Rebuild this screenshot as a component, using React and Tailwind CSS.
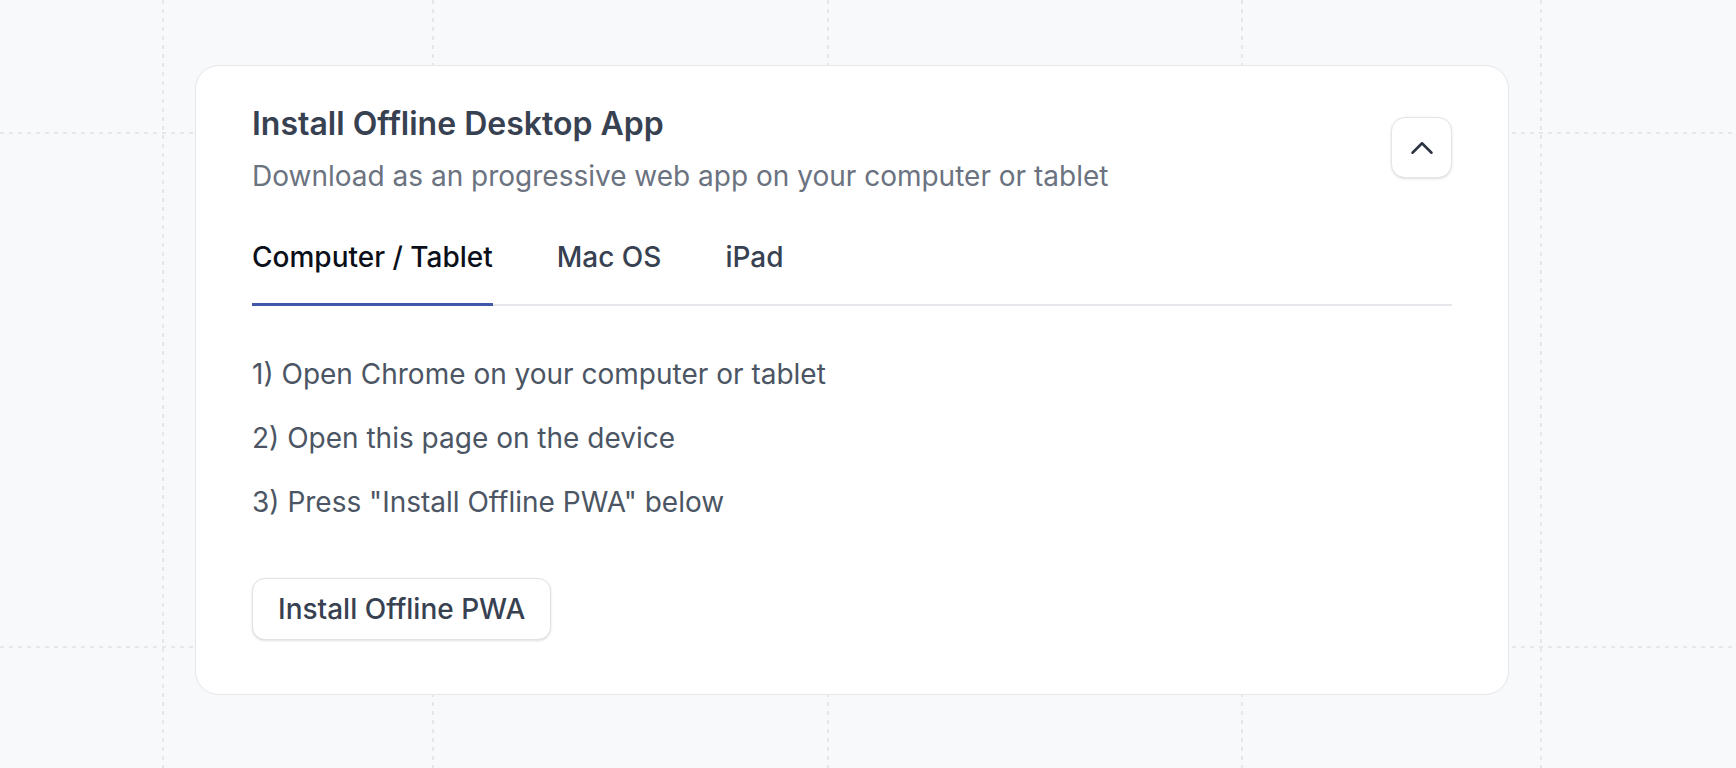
import React, { useState } from 'react';
import { ChevronUp } from 'lucide-react';

// Fond : lignes pointillées décoratives
const V_LINES = ['left-[162px]', 'left-[432px]', 'left-[827px]', 'left-[1241px]', 'left-[1540px]'];
const H_LINES = ['top-[132px]', 'top-[646px]'];

const TABS = ['Computer / Tablet', 'Mac OS', 'iPad'];

const STEPS = {
    'Computer / Tablet': [
        '1) Open Chrome on your computer or tablet',
        '2) Open this page on the device',
        '3) Press "Install Offline PWA" below',
    ],
    'Mac OS': [
        '1) Open Safari on your Mac',
        '2) Open this page on the device',
        '3) Choose File > Add to Dock',
    ],
    'iPad': [
        '1) Open Safari on your iPad',
        '2) Tap the share button',
        '3) Choose "Add to Home Screen"',
    ],
};

const GridBackground = () => (
    <div className="absolute inset-0 pointer-events-none">
        {V_LINES.map(pos => (
            <div
                key={pos}
                className={`absolute top-0 bottom-0 w-[2px] ${pos} bg-[repeating-linear-gradient(to_bottom,#e5e7eb_0_4px,transparent_4px_9px)]`}
            />
        ))}
        {H_LINES.map(pos => (
            <div
                key={pos}
                className={`absolute left-0 right-0 h-[2px] ${pos} bg-[repeating-linear-gradient(to_right,#e5e7eb_0_4px,transparent_4px_9px)]`}
            />
        ))}
    </div>
);

const App = () => {
    const [activeTab, setActiveTab] = useState(TABS[0]);
    const [open, setOpen] = useState(true);

    return (
        <div className="relative min-h-[768px] bg-[#f8f9fb] overflow-hidden font-['Inter','Liberation_Sans',sans-serif]">
            <GridBackground />

            <div className="relative ml-[195px] pt-[65px]">
                <div className="w-[1314px] bg-white border-[1.5px] border-[#e5e7eb] rounded-[24px] px-[56px] pt-[40px] pb-[54px]">
                    {/* ── En-tête ───────────────────────────── */}
                    <div className="flex justify-between items-start">
                        <div>
                            <h2 className="text-[32px] leading-[36px] font-semibold text-[#374151]">
                                Install Offline Desktop App
                            </h2>
                            <p className="mt-[18px] text-[28px] leading-[32px] text-[#6b7280]">
                                Download as an progressive web app on your computer or tablet
                            </p>
                        </div>
                        <button
                            onClick={() => setOpen(!open)}
                            className="mt-[11px] w-[61px] h-[61px] flex items-center justify-center rounded-[14px] border-[1.5px] border-[#e2e5ea] bg-white shadow-sm text-[#2d3441]"
                        >
                            <ChevronUp size={38} strokeWidth={1.6} />
                        </button>
                    </div>

                    {open && (
                        <>
                            {/* ── Onglets ───────────────────────────── */}
                            <div className="mt-[49px] flex gap-16 border-b-2 border-[#e5e7eb]">
                                {TABS.map(tab => (
                                    <button
                                        key={tab}
                                        onClick={() => setActiveTab(tab)}
                                        className={
                                            tab === activeTab
                                                ? 'pb-[30px] -mb-[2px] border-b-[3px] border-[#3f57a8] text-[28px] leading-[32px] font-medium text-[#0b0f19]'
                                                : 'pb-[30px] -mb-[2px] border-b-[3px] border-transparent text-[28px] leading-[32px] font-medium text-[#374151]'
                                        }
                                    >
                                        {tab}
                                    </button>
                                ))}
                            </div>

                            {/* ── Étapes ───────────────────────────── */}
                            <div className="mt-[52px] flex flex-col gap-8">
                                {STEPS[activeTab].map(step => (
                                    <p key={step} className="text-[28px] leading-[32px] text-[#4b5563]">
                                        {step}
                                    </p>
                                ))}
                            </div>

                            <button className="mt-[60px] px-[25px] py-[14px] rounded-[13px] border-[1.5px] border-[#dfe2e7] bg-white shadow-sm text-[28px] leading-[32px] font-medium text-[#374151]">
                                Install Offline PWA
                            </button>
                        </>
                    )}
                </div>
            </div>
        </div>
    );
};

export default App;
